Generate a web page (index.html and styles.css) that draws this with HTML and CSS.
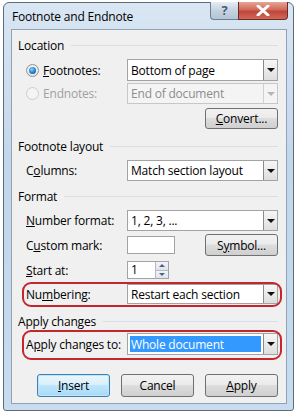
FILE: index.html
```html
<!DOCTYPE html>
<html>
<head>
	<title>Footnote and Endnote</title>
	<meta charset="UTF-8">
	<link rel="stylesheet" href="styles.css">
</head>
<body>
	<div class="window">
		<div class="titlebar">
			<span class="title">Footnote and Endnote</span>
			<div class="caption-buttons">
				<span class="cap-help">?</span>
				<span class="cap-close">
					<svg width="14" height="11" viewBox="0 0 14 11"><path d="M2 1 L12 10 M12 1 L2 10" stroke="#fff" stroke-width="3" stroke-linecap="round"/></svg>
				</span>
			</div>
		</div>
		<div class="client">
			<div class="group-head head-location"><span>Location</span><i></i></div>
			<div class="row row-footnotes">
				<label class="field-label radio-label"><span class="radio checked"></span><span><u>F</u>ootnotes:</span></label>
				<div class="combo"><span class="value">Bottom of page</span><span class="arrow"></span></div>
			</div>
			<div class="row row-endnotes disabled">
				<label class="field-label radio-label"><span class="radio"></span><span>Endnotes:</span></label>
				<div class="combo"><span class="value">End of document</span><span class="arrow"></span></div>
			</div>
			<div class="row row-convert">
				<button class="btn"><u>C</u>onvert...</button>
			</div>

			<div class="group-head head-layout"><span>Footnote layout</span><i></i></div>
			<div class="row row-columns">
				<label class="field-label">C<u>o</u>lumns:</label>
				<div class="combo"><span class="value">Match section layout</span><span class="arrow"></span></div>
			</div>

			<div class="group-head head-format"><span>Format</span><i></i></div>
			<div class="row row-numformat">
				<label class="field-label"><u>N</u>umber format:</label>
				<div class="combo"><span class="value">1, 2, 3, ...</span><span class="arrow"></span></div>
			</div>
			<div class="row row-custom">
				<label class="field-label">C<u>u</u>stom mark:</label>
				<div class="textbox"></div>
				<button class="btn btn-symbol">S<u>y</u>mbol...</button>
			</div>
			<div class="row row-start">
				<label class="field-label"><u>S</u>tart at:</label>
				<div class="spinbox">
					<span class="value">1</span>
					<span class="spin">
						<span class="spin-up"><i></i></span>
						<span class="spin-down"><i></i></span>
					</span>
				</div>
			</div>
			<div class="row row-numbering marked">
				<label class="field-label">Nu<u>m</u>bering:</label>
				<div class="combo"><span class="value">Restart each section</span><span class="arrow"></span></div>
			</div>

			<div class="group-head head-apply"><span>Apply changes</span><i></i></div>
			<div class="row row-applyto marked">
				<label class="field-label">A<u>p</u>ply changes to:</label>
				<div class="combo"><span class="value selected">Whole document</span><span class="arrow"></span></div>
			</div>

			<div class="footer">
				<button class="btn btn-default"><u>I</u>nsert</button>
				<button class="btn">Cancel</button>
				<button class="btn"><u>A</u>pply</button>
			</div>
		</div>
	</div>
</body>
</html>
```

FILE: styles.css
```css
body {
	margin: 0;
	padding: 0;
	background-color: #fff;
	font-family: "Open Sans", sans-serif;
	font-size: 12px;
	letter-spacing: -0.2px;
	color: #000;
}
.window {
	box-sizing: border-box;
	width: 291px;
	height: 409px;
	margin: 2px 0 0 3px;
	border: 1px solid #5d6b7a;
	border-radius: 6px 6px 3px 3px;
	background: linear-gradient(#d9e6f3, #c3d6ea 40%, #c9dbee);
	padding: 0 6px 6px 7px;
	display: flex;
	flex-direction: column;
}
.titlebar {
	height: 26px;
	display: flex;
	align-items: flex-start;
	justify-content: space-between;
}
.title {
	margin: 5px 0 0 1px;
	font-size: 12px;
}
.caption-buttons {
	display: flex;
	margin: -1px -1px 0 0;
	height: 18px;
}
.cap-help {
	width: 27px;
	border: 1px solid #6e7f93;
	border-top: none;
	border-right: none;
	border-radius: 0 0 0 4px;
	background: linear-gradient(#e6eef6, #c4d2e0 50%, #b5c5d6);
	color: #44546a;
	font-weight: bold;
	font-size: 13px;
	line-height: 16px;
	text-align: center;
	text-shadow: 0 0 1px #fff;
}
.cap-close {
	width: 48px;
	border: 1px solid #6b2a25;
	border-top: none;
	border-radius: 0 0 4px 0;
	background: linear-gradient(#e8a597, #d06a58 45%, #c0453a 55%, #cf6a56);
	display: flex;
	align-items: center;
	justify-content: center;
}
.client {
	flex-grow: 1;
	border: 1px solid #8fa2b6;
	background-color: #f0f0f0;
	padding: 0 8px 6px 6px;
	display: flex;
	flex-direction: column;
}
.group-head {
	height: 18px;
	display: flex;
	align-items: center;
	gap: 7px;
}
.group-head i {
	flex-grow: 1;
	border-top: 1px solid #d9dee4;
}
.head-location { margin-top: 6px; }
.head-layout { margin-top: 8px; }
.head-format { margin-top: 6px; }
.head-apply { margin-top: 8px; }

.row {
	position: relative;
	display: flex;
	align-items: center;
	padding-left: 8px;
}
.field-label {
	width: 101px;
	flex-shrink: 0;
	white-space: nowrap;
}
.radio-label {
	display: flex;
	align-items: center;
	gap: 4px;
}
.row-footnotes { margin-top: 5px; height: 22px; }
.row-endnotes { margin-top: 2px; height: 21px; }
.row-convert { margin-top: 4px; height: 21px; justify-content: flex-end; }
.row-columns { margin-top: 5px; height: 21px; }
.row-numformat { margin-top: 5px; height: 21px; }
.row-custom { margin-top: 3px; height: 22px; }
.row-start { margin-top: 5px; height: 18px; }
.row-numbering { margin-top: 5px; height: 20px; }
.row-applyto { margin-top: 3px; height: 22px; }

.marked::before {
	content: "";
	position: absolute;
	left: 4px;
	right: -4px;
	top: -2px;
	bottom: -3px;
	border: 2px solid #c4262e;
	border-radius: 9px;
}
.row-applyto::before {
	top: -3px;
	bottom: -5px;
}

.radio {
	box-sizing: border-box;
	width: 13px;
	height: 13px;
	border-radius: 50%;
	border: 1px solid #8f9295;
	background: radial-gradient(circle at 50% 40%, #fff, #dcdcdc);
	display: flex;
	align-items: center;
	justify-content: center;
}
.radio.checked::after {
	content: "";
	width: 7px;
	height: 7px;
	border-radius: 50%;
	background: radial-gradient(circle at 40% 35%, #8fd0ff, #1b7fcf 55%, #0c4a85);
}
.disabled .field-label {
	color: #a0a0a0;
}
.disabled .radio {
	border-color: #cdcdcd;
	background: #f4f4f4;
}

.combo {
	box-sizing: border-box;
	width: 151px;
	height: 100%;
	border: 1px solid #a3a3a3;
	background-color: #fff;
	display: flex;
	align-items: stretch;
}
.combo .value {
	flex-grow: 1;
	padding-left: 3px;
	display: flex;
	align-items: center;
}
.combo .value.selected {
	margin: 2px;
	padding-left: 1px;
	background-color: #3399ff;
	color: #fff;
}
.combo .arrow {
	width: 13px;
	border-left: 1px solid #8a8a8a;
	background: linear-gradient(#f6f6f6, #dedede);
	display: flex;
	align-items: center;
	justify-content: center;
}
.combo .arrow::after {
	content: "";
	width: 0;
	height: 0;
	border-left: 4px solid transparent;
	border-right: 4px solid transparent;
	border-top: 4px solid #111;
}
.disabled .combo {
	border-color: #c7c7c7;
	background-color: #f4f4f4;
	color: #8d8d8d;
}
.disabled .combo .arrow {
	border-left-color: #d0d0d0;
	background: #f4f4f4;
}
.disabled .combo .arrow::after {
	border-top-color: #b5b5b5;
}

.textbox {
	box-sizing: border-box;
	width: 48px;
	height: 18px;
	border: 1px solid #a3a3a3;
	background-color: #fff;
}
.btn {
	box-sizing: border-box;
	width: 73px;
	height: 21px;
	padding: 0;
	border: 1px solid #707070;
	border-radius: 3px;
	background: linear-gradient(#f2f2f2, #ebebeb 45%, #dddddd 50%, #cfcfcf);
	font-family: inherit;
	font-size: 12px;
	letter-spacing: inherit;
	color: #000;
}
.btn-symbol {
	margin-left: auto;
	height: 22px;
}
.btn-default {
	border-color: #3c7fb1;
	box-shadow: inset 0 0 0 1px #bfe6f8;
	background: linear-gradient(#eaf6fd, #d9f0fc 45%, #bee6fd 50%, #a7d9f5);
}

.spinbox {
	box-sizing: border-box;
	width: 42px;
	height: 18px;
	border: 1px solid #a3a3a3;
	background-color: #fff;
	display: flex;
}
.spinbox .value {
	flex-grow: 1;
	padding-left: 3px;
	line-height: 16px;
}
.spin {
	width: 12px;
	display: flex;
	flex-direction: column;
	border-left: 1px solid #b5b9c2;
}
.spin span {
	flex-grow: 1;
	background: linear-gradient(#f3f4f6, #dfe3ea);
	display: flex;
	align-items: center;
	justify-content: center;
}
.spin-up {
	border-bottom: 1px solid #b5b9c2;
}
.spin-up i {
	border-left: 3px solid transparent;
	border-right: 3px solid transparent;
	border-bottom: 3px solid #4d6185;
}
.spin-down i {
	border-left: 3px solid transparent;
	border-right: 3px solid transparent;
	border-top: 3px solid #4d6185;
}

.footer {
	margin-top: 19px;
	height: 23px;
	padding-left: 19px;
	display: flex;
	gap: 11px;
}
.footer .btn {
	height: 23px;
}
```
